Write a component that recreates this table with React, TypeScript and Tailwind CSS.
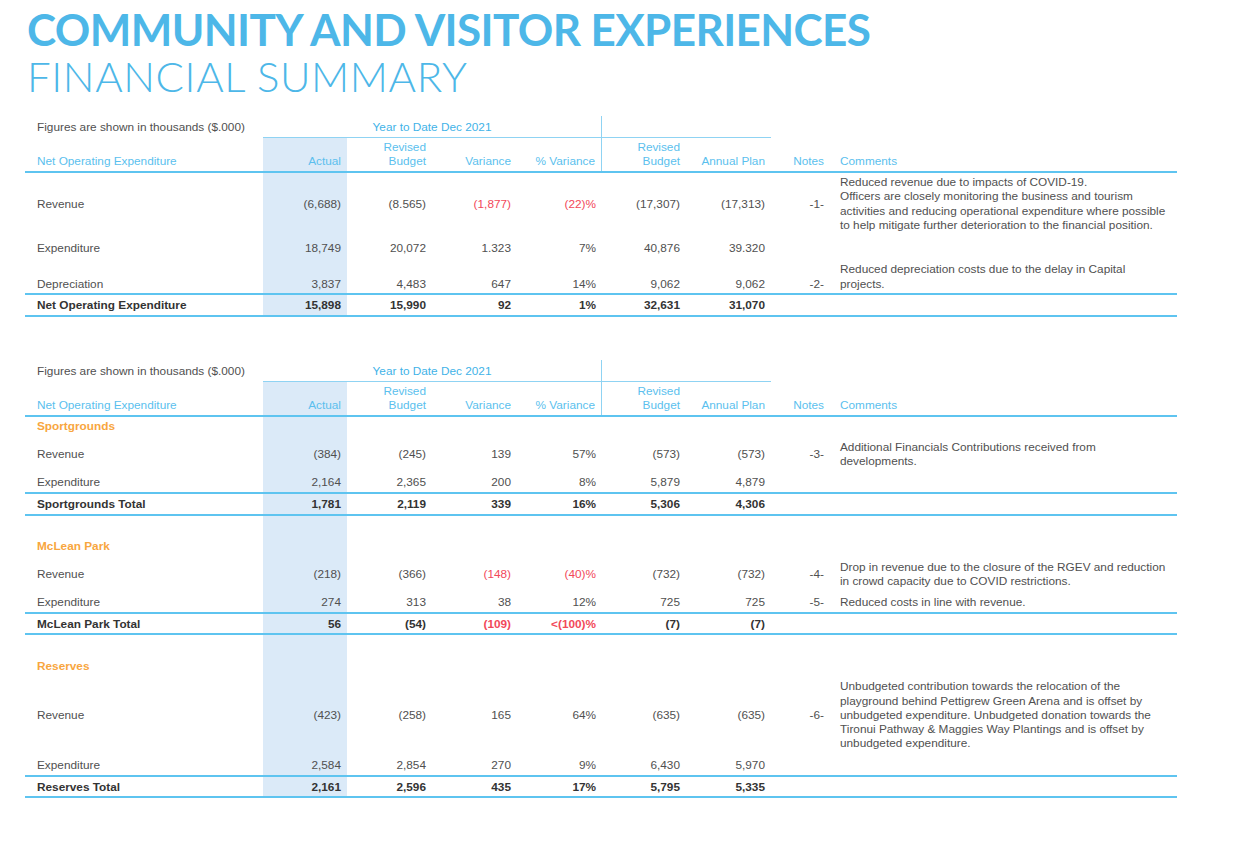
import React from "react";

const GRID = "grid grid-cols-[238px_84px_85px_85px_85px_84px_85px_59px_347px]";
const SHADE = "bg-[#dbeaf8]";

type DataRow = {
  kind?: "data" | "heading";
  label: string;
  v?: string[];
  red?: number[];
  note?: string;
  comment?: string[];
  h: string;
  end?: boolean;
  line?: boolean;
  total?: boolean;
};

function Row({ r }: { r: DataRow }) {
  const al = r.end ? "items-end pb-[2px]" : "items-center";
  const rowCls = `${GRID} ${r.h} ${r.line ? "border-b-2 border-[#5ec4f0]" : ""}`;
  if (r.kind === "heading") {
    return (
      <div className={rowCls}>
        <div className="flex items-end pb-[3px] pl-[12px] font-bold text-[#f8a63e]">{r.label}</div>
        <div className={SHADE} />
        <div />
        <div />
        <div />
        <div />
        <div />
        <div />
        <div />
      </div>
    );
  }
  const v = r.v ?? [];
  const red = r.red ?? [];
  const txt = r.total ? "font-bold text-[#333333]" : "text-[#505050]";
  const valCls = (i: number) =>
    `flex ${al} justify-end pr-[6px] ${i === 0 ? SHADE : ""} ${red.includes(i) ? "text-[#f2495a]" : ""}`;
  return (
    <div className={`${rowCls} ${txt}`}>
      <div className={`flex ${al} pl-[12px]`}>{r.label}</div>
      {v.map((x, i) => (
        <div key={i} className={valCls(i)}>
          {x}
        </div>
      ))}
      <div className={`flex ${al} justify-end pr-[6px] text-[#505050] font-normal`}>{r.note ?? ""}</div>
      <div className={`flex ${al} pl-[10px] text-[#505050] font-normal`}>
        {r.comment ? (
          <div className="leading-[14.3px]">
            {r.comment.map((c, i) => (
              <div key={i} className="whitespace-nowrap">
                {c}
              </div>
            ))}
          </div>
        ) : null}
      </div>
    </div>
  );
}

function Head() {
  return (
    <>
      <div className={`${GRID} h-[22px]`}>
        <div className="flex items-center pl-[12px] text-[#505050]">Figures are shown in thousands ($.000)</div>
        <div className="col-span-4 flex items-center justify-center border-b border-r border-[#8fd3f3] text-[#3fb3e8]">
          Year to Date Dec 2021
        </div>
        <div className="col-span-2 border-b border-[#8fd3f3]" />
        <div />
        <div />
      </div>
      <div className={`${GRID} h-[35px] border-b-2 border-[#5ec4f0] text-[#5bbfee]`}>
        <div className="flex items-end pb-[3px] pl-[12px]">Net Operating Expenditure</div>
        <div className={`flex items-end justify-end pb-[3px] pr-[6px] ${SHADE}`}>Actual</div>
        <div className="flex items-end justify-end pb-[3px] pr-[6px] text-right">
          <div>
            Revised
            <br />
            Budget
          </div>
        </div>
        <div className="flex items-end justify-end pb-[3px] pr-[6px]">Variance</div>
        <div className="flex items-end justify-end pb-[3px] pr-[6px] border-r border-[#8fd3f3]">% Variance</div>
        <div className="flex items-end justify-end pb-[3px] pr-[6px] text-right">
          <div>
            Revised
            <br />
            Budget
          </div>
        </div>
        <div className="flex items-end justify-end pb-[3px] pr-[6px]">Annual Plan</div>
        <div className="flex items-end justify-end pb-[3px] pr-[6px]">Notes</div>
        <div className="flex items-end pb-[3px] pl-[10px]">Comments</div>
      </div>
    </>
  );
}

const t1: DataRow[] = [
  {
    label: "Revenue",
    v: ["(6,688)", "(8.565)", "(1,877)", "(22)%", "(17,307)", "(17,313)"],
    red: [2, 3],
    note: "-1-",
    comment: [
      "Reduced revenue due to impacts of COVID-19.",
      "Officers are closely monitoring the business and tourism",
      "activities and reducing operational expenditure where possible",
      "to help mitigate further deterioration to the financial position.",
    ],
    h: "h-[61px]",
  },
  {
    label: "Expenditure",
    v: ["18,749", "20,072", "1.323", "7%", "40,876", "39.320"],
    h: "h-[28px]",
  },
  {
    label: "Depreciation",
    v: ["3,837", "4,483", "647", "14%", "9,062", "9,062"],
    note: "-2-",
    comment: ["Reduced depreciation costs due to the delay in Capital", "projects."],
    h: "h-[33px]",
    end: true,
    line: true,
  },
  {
    label: "Net Operating Expenditure",
    v: ["15,898", "15,990", "92", "1%", "32,631", "31,070"],
    h: "h-[22px]",
    line: true,
    total: true,
  },
];

const t2: DataRow[] = [
  { kind: "heading", label: "Sportgrounds", h: "h-[19px]" },
  {
    label: "Revenue",
    v: ["(384)", "(245)", "139", "57%", "(573)", "(573)"],
    note: "-3-",
    comment: ["Additional Financials Contributions received from", "developments."],
    h: "h-[36px]",
  },
  {
    label: "Expenditure",
    v: ["2,164", "2,365", "200", "8%", "5,879", "4,879"],
    h: "h-[22px]",
    line: true,
  },
  {
    label: "Sportgrounds Total",
    v: ["1,781", "2,119", "339", "16%", "5,306", "4,306"],
    h: "h-[22px]",
    line: true,
    total: true,
  },
  { kind: "heading", label: "McLean Park", h: "h-[40px]" },
  {
    label: "Revenue",
    v: ["(218)", "(366)", "(148)", "(40)%", "(732)", "(732)"],
    red: [2, 3],
    note: "-4-",
    comment: [
      "Drop in revenue due to the closure of the RGEV and reduction",
      "in crowd capacity due to COVID restrictions.",
    ],
    h: "h-[36px]",
  },
  {
    label: "Expenditure",
    v: ["274", "313", "38", "12%", "725", "725"],
    note: "-5-",
    comment: ["Reduced costs in line with revenue."],
    h: "h-[22px]",
    line: true,
  },
  {
    label: "McLean Park Total",
    v: ["56", "(54)", "(109)", "<(100)%", "(7)", "(7)"],
    red: [2, 3],
    h: "h-[21px]",
    line: true,
    total: true,
  },
  { kind: "heading", label: "Reserves", h: "h-[41px]" },
  {
    label: "Revenue",
    v: ["(423)", "(258)", "165", "64%", "(635)", "(635)"],
    note: "-6-",
    comment: [
      "Unbudgeted contribution towards the relocation of the",
      "playground behind Pettigrew Green Arena and is offset by",
      "unbudgeted expenditure. Unbudgeted donation towards the",
      "Tironui Pathway & Maggies Way Plantings and is offset by",
      "unbudgeted expenditure.",
    ],
    h: "h-[78px]",
  },
  {
    label: "Expenditure",
    v: ["2,584", "2,854", "270", "9%", "6,430", "5,970"],
    h: "h-[23px]",
    line: true,
  },
  {
    label: "Reserves Total",
    v: ["2,161", "2,596", "435", "17%", "5,795", "5,335"],
    h: "h-[21px]",
    line: true,
    total: true,
  },
];

export default function App() {
  return (
    <div className="w-[1252px] h-[863px] overflow-hidden bg-white font-['Liberation_Sans',Arial,sans-serif] text-[11.8px] leading-[14px]">
      <div className="pt-[7px] pl-[27px] font-['Lato',sans-serif] text-[#4db7e8]">
        <div className="text-[44px] leading-[44px] font-bold tracking-[-0.6px] whitespace-nowrap">
          COMMUNITY AND VISITOR EXPERIENCES
        </div>
        <div className="mt-[4px] text-[42px] leading-[42px] font-light tracking-[0.6px] whitespace-nowrap">
          FINANCIAL SUMMARY
        </div>
      </div>
      <div className="ml-[25px] mt-[19px] w-[1152px]">
        <Head />
        {t1.map((r, i) => (
          <Row key={i} r={r} />
        ))}
      </div>
      <div className="ml-[25px] mt-[43px] w-[1152px]">
        <Head />
        {t2.map((r, i) => (
          <Row key={i} r={r} />
        ))}
      </div>
    </div>
  );
}
